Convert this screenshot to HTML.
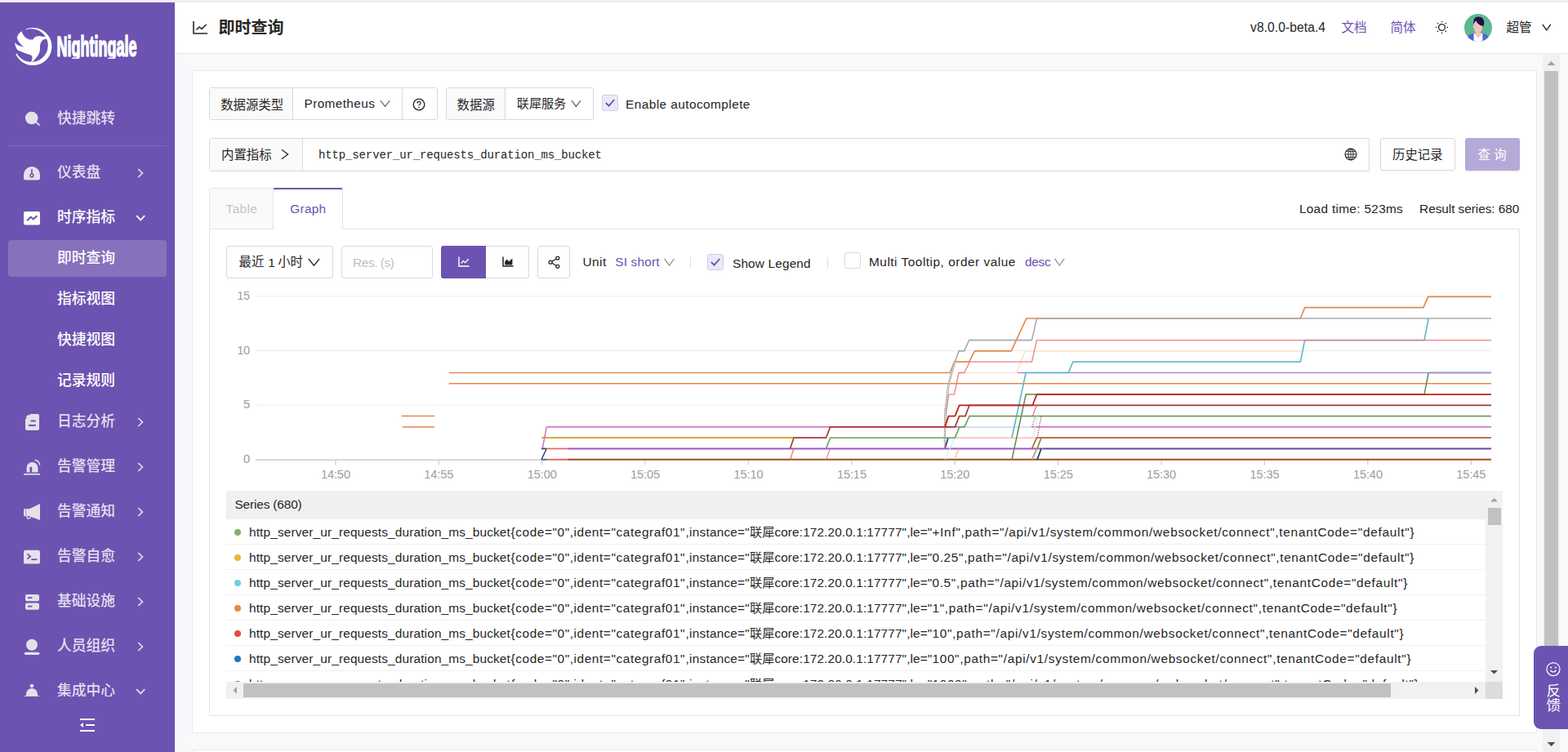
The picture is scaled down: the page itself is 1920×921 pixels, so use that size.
<!DOCTYPE html>
<html lang="zh-CN">
<head>
<meta charset="utf-8">
<title>Nightingale</title>
<style>
*{box-sizing:border-box;margin:0;padding:0}
html,body{width:1920px;height:921px;overflow:hidden;background:#f8f9fb;font-family:"Liberation Sans",sans-serif;font-size:15.4px;color:#262626}
.abs{position:absolute}
.cjt{display:inline-block;line-height:1;white-space:nowrap;font-family:"Liberation Sans","Noto Sans CJK SC",sans-serif;vertical-align:baseline}
#topband{position:absolute;left:0;top:0;width:1920px;height:3px;background:#e9ebf0}
#topband:before{content:"";position:absolute;left:0;top:0;width:100%;height:1px;background:#f4f5f7}
/* sidebar */
#side{position:absolute;left:0;top:3px;width:214px;height:918px;background:#6c53b1;overflow:hidden}
#menu{position:absolute;left:0;top:0;width:214px;height:850px;overflow:hidden}
.mi{position:absolute;left:10px;width:194px;height:45px;border-radius:4px}
.mi.act{background:#8771bd}
.mi .ic{position:absolute;left:19px;top:12px;width:21px;height:21px}
.mi .tx{position:absolute;left:60px;top:13.6px;height:18px;line-height:0}
.mi .tx .cjt{font-size:17.8px;font-weight:500}
.mi .ar{position:absolute;left:155px;top:15px;width:14px;height:14px}
#sdiv{position:absolute;left:10px;top:175px;width:194px;height:1px;background:#7f69bc}
/* header */
#hdr{position:absolute;left:214px;top:3px;width:1706px;height:63px;background:#fff;border-bottom:1px solid #e6e8ed}
.lk{color:#6c53b1}
/* card */
#card{position:absolute;left:235px;top:86px;width:1647px;height:812px;background:#fff;border:1px solid #e7e9ed}
#card2{position:absolute;left:235px;top:918px;width:1647px;height:3px;background:#fff;border:1px solid #e7e9ed;border-bottom:none}
.grp{position:absolute;height:40px;border:1px solid #d9d9d9;border-radius:3px;background:#fff}
.addon{position:absolute;top:0;height:38px;background:#fafafa;border-right:1px solid #d9d9d9}
.t{position:absolute;white-space:nowrap;line-height:1}
</style>
</head>
<body>
<div id="topband"></div>

<!-- ================= SIDEBAR ================= -->
<div id="side">
  <div id="logo" class="abs" style="left:0;top:0;width:214px;height:110px">
    <svg class="abs" style="left:-0.5px;top:17px;overflow:visible" width="214" height="80" viewBox="0 0 2054.4 768"><defs><clipPath id="rc"><path d="M300 60 L700 60 L700 700 L150 700 L150 440 L388 440 L388 300 L300 200 Z"/></clipPath></defs><path d="M388 134 A221 221 0 1 1 387.9 134 Z M368 146 A196 196 0 1 0 368.1 146 Z" fill="#fff" fill-rule="evenodd" clip-path="url(#rc)"/><path d="M205 455 C240 505 290 535 345 545 L335 560 C280 550 230 515 205 455 Z" fill="#fff"/><path d="M255 175 C268 228 318 282 386 274 C402 238 442 224 482 236 L592 250 L504 276 C478 300 466 340 470 382 C470 442 430 502 322 584 L372 522 C386 492 382 470 364 456 C318 442 250 420 206 396 C190 376 180 350 172 308 C200 340 240 356 282 360 C240 330 206 290 200 250 C206 220 230 190 255 175 Z" fill="#fff"/></svg><svg class="abs" style="left:66px;top:30px;overflow:visible" width="110" height="50"><defs><clipPath id="lt"><rect x="0" y="0" width="110" height="36.7"/></clipPath></defs><g clip-path="url(#lt)"><text x="0" y="0" transform="translate(3.5,35.5) scale(0.515,1)" font-family="Liberation Sans, sans-serif" font-weight="bold" font-size="35" fill="#fff" stroke="#fff" stroke-width="1.6" stroke-linejoin="round">Nightingale</text></g><path d="M28.1,35 L31.5,35 L31.5,37.5 Q31.5,39.1 29.7,39.1 L23.0,39.1 Q22.1,39.1 22.1,38.3 L22.1,37.5 L27.2,37.5 Q28.1,37.5 28.1,36.7 Z" fill="#fff"/><path d="M72.1,35 L75.5,35 L75.5,37.5 Q75.5,39.1 73.7,39.1 L67.0,39.1 Q66.1,39.1 66.1,38.3 L66.1,37.5 L71.2,37.5 Q72.1,37.5 72.1,36.7 Z" fill="#fff"/></svg>
  </div>
  <div id="menu">
    <div class="mi" style="top:120px"><span class="ic"><svg width="21" height="21" viewBox="0 0 21 21" style="display:block;overflow:visible" ><circle cx="9.7" cy="9.5" r="7.8" fill="#e3e1ea"/><path d="M14.5 14 L19 18.2" stroke="#e3e1ea" stroke-width="1.8" stroke-linecap="round"/></svg></span><span class="tx"><span class="cjt" style="width:71.2px;color:#e3deef">快捷跳转</span></span></div>
    <div id="sdiv"></div>
    <div class="mi" style="top:186px"><span class="ic"><svg width="21" height="21" viewBox="0 0 21 21" style="display:block;overflow:visible" ><path d="M0 13 A10 10 0 0 1 20 13 L20 17.2 Q20 19.6 17.6 19.6 L2.4 19.6 Q0 19.6 0 17.2 Z" fill="#e3e1ea"/><path d="M10 6.2 L10 12" stroke="#6c53b1" stroke-width="1.7"/><circle cx="10" cy="14" r="1.9" fill="none" stroke="#6c53b1" stroke-width="1.5"/></svg></span><span class="tx"><span class="cjt" style="width:53.4px;color:#e3deef">仪表盘</span></span><span class="ar"><svg width="14" height="14" viewBox="0 0 14 14" style="display:block;overflow:visible" ><path d="M4.2 3 L9.4 8 L4.2 13" fill="none" stroke="#e3deef" stroke-width="1.7"/></svg></span></div>
    <div class="mi" style="top:241px"><span class="ic"><svg width="21" height="21" viewBox="0 0 21 21" style="display:block;overflow:visible" ><rect x="0" y="3" width="20" height="16.6" rx="2" fill="#fff"/><path d="M4.2 14.2 L8.6 9.8 L11.8 12.4 L16.4 8.2" fill="none" stroke="#6c53b1" stroke-width="2" stroke-linejoin="miter"/></svg></span><span class="tx"><span class="cjt" style="width:71.2px;color:#ffffff">时序指标</span></span><span class="ar"><svg width="14" height="14" viewBox="0 0 14 14" style="display:block;overflow:visible" ><path d="M2.2 5.2 L7.2 10.4 L12.2 5.2" fill="none" stroke="#fff" stroke-width="1.7"/></svg></span></div>
    <div class="mi act" style="top:291px"><span class="tx"><span class="cjt" style="width:71.2px;color:#ffffff">即时查询</span></span></div>
    <div class="mi" style="top:341px"><span class="tx"><span class="cjt" style="width:71.2px;color:#ffffff">指标视图</span></span></div>
    <div class="mi" style="top:391px"><span class="tx"><span class="cjt" style="width:71.2px;color:#ffffff">快捷视图</span></span></div>
    <div class="mi" style="top:441px"><span class="tx"><span class="cjt" style="width:71.2px;color:#ffffff">记录规则</span></span></div>
    <div class="mi" style="top:491px"><span class="ic"><svg width="21" height="21" viewBox="0 0 21 21" style="display:block;overflow:visible" ><path d="M8.4 1 L17 1 Q19 1 19 3 L19 19 Q19 21 17 21 L4 21 Q2 21 2 19 L2 7.4 Z" fill="#e3e1ea"/><path d="M2.2 5.3 L6.3 1.2 L6.3 5.3 Z" fill="#e3e1ea"/><path d="M8.6 9.5 L14.8 9.5 M6 15 L14.8 15" stroke="#6c53b1" stroke-width="2"/></svg></span><span class="tx"><span class="cjt" style="width:71.2px;color:#e3deef">日志分析</span></span><span class="ar"><svg width="14" height="14" viewBox="0 0 14 14" style="display:block;overflow:visible" ><path d="M4.2 3 L9.4 8 L4.2 13" fill="none" stroke="#e3deef" stroke-width="1.7"/></svg></span></div>
    <div class="mi" style="top:546px"><span class="ic"><svg width="21" height="21" viewBox="0 0 21 21" style="display:block;overflow:visible" ><path d="M3.6 17.6 L3.6 12 A6.95 6.95 0 0 1 17.5 12 L17.5 17.6 Z" fill="#e3e1ea"/><path d="M7.4 17.7 L7.4 12.2 Q7.4 10.6 8.8 10.6 Q10.2 10.6 10.2 12.2 L10.2 17.7 Z" fill="#6c53b1"/><path d="M0 19.8 L20 19.8" stroke="#e3e1ea" stroke-width="1.7"/><path d="M14.2 2.6 Q18.6 3.6 19.6 8" fill="none" stroke="#e3e1ea" stroke-width="1.5" stroke-linecap="round"/></svg></span><span class="tx"><span class="cjt" style="width:71.2px;color:#e3deef">告警管理</span></span><span class="ar"><svg width="14" height="14" viewBox="0 0 14 14" style="display:block;overflow:visible" ><path d="M4.2 3 L9.4 8 L4.2 13" fill="none" stroke="#e3deef" stroke-width="1.7"/></svg></span></div>
    <div class="mi" style="top:601px"><span class="ic"><svg width="21" height="21" viewBox="0 0 21 21" style="display:block;overflow:visible" ><path d="M20 1 L20 21 L7 16.2 L1.2 16.2 Q0 16.2 0 15 L0 8.4 Q0 7.2 1.2 7.2 L7 7.2 Z" fill="#e3e1ea"/><path d="M4 16.5 Q4 19.2 6.2 19.2 Q8 19.2 8.2 17" fill="none" stroke="#e3e1ea" stroke-width="1.3"/><path d="M2.6 8 L2.6 15.4" stroke="#6c53b1" stroke-width="1" opacity=".55"/></svg></span><span class="tx"><span class="cjt" style="width:71.2px;color:#e3deef">告警通知</span></span><span class="ar"><svg width="14" height="14" viewBox="0 0 14 14" style="display:block;overflow:visible" ><path d="M4.2 3 L9.4 8 L4.2 13" fill="none" stroke="#e3deef" stroke-width="1.7"/></svg></span></div>
    <div class="mi" style="top:656px"><span class="ic"><svg width="21" height="21" viewBox="0 0 21 21" style="display:block;overflow:visible" ><rect x="0" y="2.8" width="20" height="16.8" rx="2.2" fill="#e3e1ea"/><path d="M4.4 7.4 L8.2 10.5 L4.4 13.6" fill="none" stroke="#6c53b1" stroke-width="1.8"/><path d="M9.4 14.2 L16.4 14.2" stroke="#6c53b1" stroke-width="1.8"/></svg></span><span class="tx"><span class="cjt" style="width:71.2px;color:#e3deef">告警自愈</span></span><span class="ar"><svg width="14" height="14" viewBox="0 0 14 14" style="display:block;overflow:visible" ><path d="M4.2 3 L9.4 8 L4.2 13" fill="none" stroke="#e3deef" stroke-width="1.7"/></svg></span></div>
    <div class="mi" style="top:711px"><span class="ic"><svg width="21" height="21" viewBox="0 0 21 21" style="display:block;overflow:visible" ><rect x="2" y="2" width="17" height="8.2" rx="2" fill="#e3e1ea"/><rect x="2" y="12.4" width="17" height="8.4" rx="2" fill="#e3e1ea"/><path d="M5 6.1 L10.4 6.1 M5 16.6 L10.4 16.6" stroke="#6c53b1" stroke-width="1.6"/></svg></span><span class="tx"><span class="cjt" style="width:71.2px;color:#e3deef">基础设施</span></span><span class="ar"><svg width="14" height="14" viewBox="0 0 14 14" style="display:block;overflow:visible" ><path d="M4.2 3 L9.4 8 L4.2 13" fill="none" stroke="#e3deef" stroke-width="1.7"/></svg></span></div>
    <div class="mi" style="top:766px"><span class="ic"><svg width="21" height="21" viewBox="0 0 21 21" style="display:block;overflow:visible" ><circle cx="10" cy="8.8" r="7" fill="#e3e1ea"/><path d="M2.4 19.3 L17.8 19.3" stroke="#e3e1ea" stroke-width="3.2" stroke-linecap="round"/></svg></span><span class="tx"><span class="cjt" style="width:71.2px;color:#e3deef">人员组织</span></span><span class="ar"><svg width="14" height="14" viewBox="0 0 14 14" style="display:block;overflow:visible" ><path d="M4.2 3 L9.4 8 L4.2 13" fill="none" stroke="#e3deef" stroke-width="1.7"/></svg></span></div>
    <div class="mi" style="top:821px"><span class="ic"><svg width="21" height="21" viewBox="0 0 21 21" style="display:block;overflow:visible" ><circle cx="10" cy="4" r="2.3" fill="#e3e1ea"/><path d="M3 16.4 L3 14 A7 7 0 0 1 17 14 L17 16.4 Z" fill="#e3e1ea"/><path d="M1 16.8 L19 16.8" stroke="#e3e1ea" stroke-width="1.4"/></svg></span><span class="tx"><span class="cjt" style="width:71.2px;color:#e3deef">集成中心</span></span><span class="ar"><svg width="14" height="14" viewBox="0 0 14 14" style="display:block;overflow:visible" ><path d="M2.2 5.2 L7.2 10.4 L12.2 5.2" fill="none" stroke="#e3deef" stroke-width="1.7"/></svg></span></div>
  </div>
  <div id="collapse" class="abs" style="left:97px;top:876px;width:20px;height:18px"><svg width="20" height="18" viewBox="0 0 20 18" style="display:block;overflow:visible" ><path d="M1 2 L19 2 M8 9 L19 9 M1 16 L19 16" stroke="#fff" stroke-width="1.8"/><path d="M1 9 L5 6 L5 12 Z" fill="#fff"/></svg></div>
</div>

<!-- ================= HEADER ================= -->
<div id="hdr">
  <span class="abs" style="left:22px;top:23px;width:18px;height:16px"><svg width="18" height="16" viewBox="0 0 18 16" style="display:block;overflow:visible" ><path d="M1 0 L1 15 L18 15" fill="none" stroke="#262626" stroke-width="1.6"/><path d="M4.5 10.6 L8 7 L11 9.4 L16.6 4" fill="none" stroke="#262626" stroke-width="1.5"/></svg></span>
  <span class="t" style="left:53.5px;top:21px"><span class="cjt" style="font-size:20px;font-weight:bold;width:80px;color:#262626">即时查询</span></span>
  <span class="t" id="ver" style="left:1317.0px;top:23px;font-size:15.6px;color:#262626;letter-spacing:0.083px">v8.0.0-beta.4</span>
  <span class="t" style="left:1428.5px;top:22.5px"><span class="cjt" style="font-size:15.6px;width:31.2px;color:#6c53b1">文档</span></span>
  <span class="t" style="left:1488.5px;top:22.5px"><span class="cjt" style="font-size:15.6px;width:31.2px;color:#6c53b1">简体</span></span>
  <span class="abs" style="left:1543px;top:22px;width:17px;height:17px"><svg width="17" height="17" viewBox="0 0 17 17" style="display:block;overflow:visible" ><circle cx="8.5" cy="8.5" r="3.9" fill="none" stroke="#262626" stroke-width="1.3"/><circle cx="15.40" cy="8.50" r="0.8" fill="#262626"/><circle cx="13.38" cy="13.38" r="0.8" fill="#262626"/><circle cx="8.50" cy="15.40" r="0.8" fill="#262626"/><circle cx="3.62" cy="13.38" r="0.8" fill="#262626"/><circle cx="1.60" cy="8.50" r="0.8" fill="#262626"/><circle cx="3.62" cy="3.62" r="0.8" fill="#262626"/><circle cx="8.50" cy="1.60" r="0.8" fill="#262626"/><circle cx="13.38" cy="3.62" r="0.8" fill="#262626"/></svg></span>
  <span class="abs" style="left:1579px;top:13.5px;width:34px;height:34px"><svg width="34" height="34" viewBox="0 0 34 34" style="display:block;overflow:visible" ><defs><clipPath id="av"><circle cx="17" cy="17" r="17"/></clipPath></defs><g clip-path="url(#av)"><rect width="34" height="34" fill="#5cb892"/><path d="M3 34 L5 27 Q6 25 9 24.4 L14.6 23 L19.4 23 L25 24.4 Q28 25 29 27 L31 34 Z" fill="#5562d2"/><path d="M11.6 24 L22.4 24 L22.4 34 L11.6 34 Z" fill="#fff"/><path d="M13.4 22.6 L20.6 22.6 L20.2 26.2 L17 29.4 L13.8 26.2 Z" fill="#f7c0c0"/><path d="M11.6 9.6 Q11.6 5 17 5 Q22.2 5 22.2 10 L22 17.6 Q21.6 22.4 17.4 22.8 L14 22.8 Q12.2 21 12 17.4 Q10.2 17 10.6 15 Q10.8 13.6 11.8 13.8 Z" fill="#f7c0c0"/><path d="M11.4 12.8 Q10.4 3.4 17.4 3.6 Q24.4 3.8 24.2 11 Q24.2 14.4 23.4 15 Q20 14.6 17.4 12.4 Q15.2 10.6 14.4 8.4 Q13.4 8.6 12.8 10.2 Z" fill="#1f1040"/></g></svg></span>
  <span class="t" style="left:1630.5px;top:23.3px"><span class="cjt" style="font-size:15.6px;width:31.2px;color:#262626">超管</span></span>
  <span class="abs" style="left:1674px;top:26px;width:12px;height:9px"><svg width="12" height="9" viewBox="0 0 12 9" style="display:block;overflow:visible" ><path d="M0.8 1 L5.8 8 L10.8 1" fill="none" stroke="#262626" stroke-width="1.3"/></svg></span>
</div>

<!-- ================= CONTENT ================= -->
<div id="card">
<div id="pg" style="position:absolute;left:-236px;top:-87px;width:1920px;height:921px">
<style>
#pg .vd{position:absolute;width:1px;background:#d9d9d9}
#pg .box{position:absolute;border:1px solid #d9d9d9;border-radius:3px;background:#fff;height:40px}
#pg .cb{position:absolute;width:20px;height:20px;border-radius:3px}
#pg .cb.on{background:#ece9f6;border:1px solid #d3cceb}
#pg .cb.off{background:#fff;border:1px solid #d9d9d9}
#pg .row{position:absolute;left:277px;width:1542px;height:31px;border-bottom:1px solid #f0f0f0}
#pg .row i{position:absolute;left:10.2px;top:11.6px;width:8px;height:8px;border-radius:50%}
#pg .row>span{position:absolute;left:28px;top:7.6px;white-space:nowrap;line-height:1;font-size:15.4px;color:#262626}
</style>

<!-- ===== row 1 : datasource ===== -->
<div class="grp" style="left:256px;top:107px;width:280px"></div>
<div class="addon" style="left:257px;top:108px;width:102px"></div>
<div class="vd" style="left:492px;top:108px;height:38px"></div>
<span class="t" style="left:270.2px;top:120.7px"><span class="cjt" style="font-size:15.4px;width:77px;color:#262626">数据源类型</span></span>
<span class="t" id="prom" style="left:372.5px;top:118.9px;letter-spacing:0.378px">Prometheus</span>
<svg class="abs" style="left:465px;top:122px" width="14" height="10"><path d="M0.8 1 L6.6 8.4 L12.4 1" fill="none" stroke="#595959" stroke-width="1.2"/></svg>
<svg class="abs" style="left:505px;top:119.6px" width="16" height="16"><circle cx="8" cy="8" r="6.8" fill="none" stroke="#262626" stroke-width="1.3"/><path d="M5.9 6.6 Q5.9 4.4 8 4.4 Q10.1 4.4 10.1 6.3 Q10.1 7.4 8.9 8 Q8 8.5 8 9.6" fill="none" stroke="#262626" stroke-width="1.2"/><circle cx="8" cy="11.5" r=".85" fill="#262626"/></svg>

<div class="grp" style="left:546px;top:107px;width:181px"></div>
<div class="addon" style="left:547px;top:108px;width:72px"></div>
<span class="t" style="left:559.6px;top:120.7px"><span class="cjt" style="font-size:15.4px;width:46.2px;color:#262626">数据源</span></span>
<span class="t" style="left:632.8px;top:119.3px"><span class="cjt" style="font-size:15.1px;width:60.4px;color:#262626">联犀服务</span></span>
<svg class="abs" style="left:699px;top:122px" width="14" height="10"><path d="M0.8 1 L6.4 8.4 L12 1" fill="none" stroke="#595959" stroke-width="1.2"/></svg>
<div class="cb on" style="left:737px;top:115.8px"></div>
<svg class="abs" style="left:737px;top:115.8px" width="20" height="20"><path d="M4.8 10 L8.6 13.6 L15.2 6" fill="none" stroke="#6c53b1" stroke-width="1.9"/></svg>
<span class="t" id="eac" style="left:766.0px;top:119.5px;letter-spacing:0.433px">Enable autocomplete</span>

<!-- ===== row 2 : query ===== -->
<div class="grp" style="left:256px;top:169px;width:1421px;height:41px;border-radius:3px 0 0 3px"></div>
<div class="addon" style="left:257px;top:170px;width:114px;height:39px"></div>
<span class="t" style="left:271px;top:182.4px"><span class="cjt" style="font-size:15.4px;width:61.6px;color:#262626">内置指标</span></span>
<svg class="abs" style="left:343px;top:181.6px" width="12" height="14"><path d="M2 1.2 L9.6 7 L2 12.8" fill="none" stroke="#262626" stroke-width="1.3"/></svg>
<span class="t" id="mono" style="left:390.1px;top:182.6px;font-family:'Liberation Mono',monospace;font-size:14px;letter-spacing:-0.147px;color:#262626">http_server_ur_requests_duration_ms_bucket</span>
<svg class="abs" style="left:1646.4px;top:181.4px" width="16" height="16"><circle cx="8" cy="8" r="6.9" fill="none" stroke="#262626" stroke-width="1.2"/><ellipse cx="8" cy="8" rx="3.1" ry="6.9" fill="none" stroke="#262626" stroke-width="1"/><path d="M8 1 L8 15 M1.2 8 L14.8 8 M2.4 4.4 L13.6 4.4 M2.4 11.6 L13.6 11.6" stroke="#262626" stroke-width="1" opacity=".9"/></svg>
<div class="box" style="left:1690px;top:169px;width:92px;box-shadow:0 2px 0 rgba(0,0,0,.016)"></div>
<span class="t" style="left:1705px;top:182px"><span class="cjt" style="font-size:15.4px;width:61.6px;color:#262626">历史记录</span></span>
<div class="abs" style="left:1794px;top:169px;width:67px;height:40px;background:#b5a9d8;border-radius:3px;box-shadow:0 2px 0 rgba(0,0,0,.045)"></div>
<span class="t" style="left:1809.6px;top:182px"><span class="cjt" style="font-size:15.4px;width:15.4px;color:#fff">查</span></span><span class="t" style="left:1829.2px;top:182px"><span class="cjt" style="font-size:15.4px;width:15.4px;color:#fff">询</span></span>

<!-- ===== tabs ===== -->
<div class="abs" style="left:256px;top:280px;width:1605px;height:597px;border:1px solid #e3e5ec;background:#fff"></div>
<div class="abs" style="left:256px;top:230px;width:79px;height:51px;background:#fafafa;border:1px solid #e3e5ec;border-radius:3px 0 0 0"></div>
<div class="abs" style="left:334px;top:230px;width:86px;height:51px;background:#fff;border:1px solid #e3e5ec;border-top:2px solid #6c53b1;border-bottom:none;border-radius:3px 3px 0 0"></div>
<span class="t" id="ttab" style="left:276.6px;top:247.8px;color:#c4c4c4;letter-spacing:0.350px">Table</span>
<span class="t" id="gtab" style="left:355.3px;top:247.8px;color:#6c53b1;letter-spacing:0.275px">Graph</span>
<span class="t" id="load" style="left:1590.9px;top:247.8px;letter-spacing:0.306px">Load time: 523ms</span>
<span class="t" id="rser" style="left:1738.1px;top:247.8px;letter-spacing:-0.059px">Result series: 680</span>

<!-- ===== toolbar ===== -->
<div class="box" style="left:277px;top:301px;width:131px;box-shadow:0 2px 0 rgba(0,0,0,.016)"></div>
<span class="t" style="left:292.6px;top:313.2px"><span class="cjt" style="font-size:15.4px;width:30.8px;color:#262626">最近</span></span>
<span class="t" style="left:328.2px;top:313.6px">1</span>
<span class="t" style="left:340.2px;top:313.2px"><span class="cjt" style="font-size:15.4px;width:30.8px;color:#262626">小时</span></span>
<svg class="abs" style="left:377px;top:315.6px" width="16" height="11"><path d="M0.8 1 L7.4 9.2 L14 1" fill="none" stroke="#262626" stroke-width="1.3"/></svg>
<div class="box" style="left:418px;top:301px;width:112px"></div>
<span class="t" id="res" style="left:432.1px;top:313.7px;color:#bfbfbf;letter-spacing:-0.444px">Res. (s)</span>
<div class="abs" style="left:540px;top:301px;width:55px;height:40px;background:#6c53b1;border-radius:3px 0 0 3px"></div>
<svg class="abs" style="left:560.5px;top:313.6px" width="14" height="13"><path d="M1 0.4 L1 12 L13.6 12" fill="none" stroke="#fff" stroke-width="1.4"/><path d="M3.6 8.6 L6.2 5.6 L8.6 7.6 L12.6 3.2" fill="none" stroke="#fff" stroke-width="1.3"/></svg>
<div class="abs" style="left:595px;top:301px;width:53px;height:40px;background:#fff;border:1px solid #d9d9d9;border-left:none;border-radius:0 3px 3px 0"></div>
<svg class="abs" style="left:614.6px;top:313.6px" width="14" height="13"><path d="M1 0.4 L1 12 L13.6 12" fill="none" stroke="#262626" stroke-width="1.5"/><path d="M3.2 10.4 L3.2 6.4 L5.8 3.6 L8.2 6.2 L12.4 2.4 L12.4 10.4 Z" fill="#262626"/></svg>
<div class="box" style="left:658px;top:301px;width:40px;box-shadow:0 2px 0 rgba(0,0,0,.016)"></div>
<svg class="abs" style="left:671.4px;top:312.8px" width="16" height="17"><circle cx="3.1" cy="8.2" r="2" fill="none" stroke="#262626" stroke-width="1.3"/><circle cx="11.8" cy="3.1" r="2" fill="none" stroke="#262626" stroke-width="1.3"/><circle cx="11.8" cy="13.3" r="2" fill="none" stroke="#262626" stroke-width="1.3"/><path d="M4.9 7.1 L10 4.2 M4.9 9.3 L10 12.2" stroke="#262626" stroke-width="1.3"/></svg>
<span class="t" id="unit" style="left:713.4px;top:312.5px;letter-spacing:0.530px">Unit</span>
<span class="t" id="sish" style="left:753.3px;top:312.5px;color:#6c53b1;letter-spacing:0.159px">SI short</span>
<svg class="abs" style="left:813px;top:316px" width="14" height="11"><path d="M0.6 0.8 L6.6 9 L12.6 0.8" fill="none" stroke="#8c8c8c" stroke-width="1.2"/></svg>
<div class="abs" style="left:845px;top:315px;width:1px;height:13px;background:#dcdcdc"></div>
<div class="cb on" style="left:866px;top:311px"></div>
<svg class="abs" style="left:866px;top:311px" width="20" height="20"><path d="M4.8 10 L8.6 13.6 L15.2 6" fill="none" stroke="#6c53b1" stroke-width="1.9"/></svg>
<span class="t" id="shl" style="left:897.0px;top:315px;letter-spacing:0.150px">Show Legend</span>
<div class="abs" style="left:1013px;top:315px;width:1px;height:13px;background:#dcdcdc"></div>
<div class="cb off" style="left:1034px;top:309px"></div>
<span class="t" id="mtt" style="left:1064.0px;top:313.2px;letter-spacing:0.510px">Multi Tooltip, order value</span>
<span class="t" id="desc" style="left:1255.0px;top:313.2px;color:#6c53b1;letter-spacing:-0.254px">desc</span>
<svg class="abs" style="left:1291px;top:316.4px" width="14" height="11"><path d="M0.6 0.8 L6.4 9 L12.2 0.8" fill="none" stroke="#8c8c8c" stroke-width="1.2"/></svg>

<!-- ===== chart ===== -->
<svg class="abs" style="left:277px;top:350px" width="1563" height="246" viewBox="277 350 1563 246">
<path d="M313 496.1 H1826" stroke="#f0f0f0" stroke-width="1.3"/>
<path d="M313 429.5 H1826" stroke="#f0f0f0" stroke-width="1.3"/>
<path d="M313 362.8 H1826" stroke="#f0f0f0" stroke-width="1.3"/>
<path d="M313 563.2 H1826" stroke="#cfcfcf" stroke-width="1.4"/>
<g font-family="Liberation Sans, sans-serif" font-size="14.6px" fill="#9c9c9c">
<path d="M410.9 563.5 V569.5" stroke="#cfcfcf" stroke-width="1.3"/>
<text x="410.9" y="586" text-anchor="middle" letter-spacing="-0.1">14:50</text>
<path d="M537.3 563.5 V569.5" stroke="#cfcfcf" stroke-width="1.3"/>
<text x="537.3" y="586" text-anchor="middle" letter-spacing="-0.1">14:55</text>
<path d="M663.7 563.5 V569.5" stroke="#cfcfcf" stroke-width="1.3"/>
<text x="663.7" y="586" text-anchor="middle" letter-spacing="-0.1">15:00</text>
<path d="M790.1 563.5 V569.5" stroke="#cfcfcf" stroke-width="1.3"/>
<text x="790.1" y="586" text-anchor="middle" letter-spacing="-0.1">15:05</text>
<path d="M916.5 563.5 V569.5" stroke="#cfcfcf" stroke-width="1.3"/>
<text x="916.5" y="586" text-anchor="middle" letter-spacing="-0.1">15:10</text>
<path d="M1042.9 563.5 V569.5" stroke="#cfcfcf" stroke-width="1.3"/>
<text x="1042.9" y="586" text-anchor="middle" letter-spacing="-0.1">15:15</text>
<path d="M1169.3 563.5 V569.5" stroke="#cfcfcf" stroke-width="1.3"/>
<text x="1169.3" y="586" text-anchor="middle" letter-spacing="-0.1">15:20</text>
<path d="M1295.7 563.5 V569.5" stroke="#cfcfcf" stroke-width="1.3"/>
<text x="1295.7" y="586" text-anchor="middle" letter-spacing="-0.1">15:25</text>
<path d="M1422.1 563.5 V569.5" stroke="#cfcfcf" stroke-width="1.3"/>
<text x="1422.1" y="586" text-anchor="middle" letter-spacing="-0.1">15:30</text>
<path d="M1548.5 563.5 V569.5" stroke="#cfcfcf" stroke-width="1.3"/>
<text x="1548.5" y="586" text-anchor="middle" letter-spacing="-0.1">15:35</text>
<path d="M1674.9 563.5 V569.5" stroke="#cfcfcf" stroke-width="1.3"/>
<text x="1674.9" y="586" text-anchor="middle" letter-spacing="-0.1">15:40</text>
<path d="M1801.3 563.5 V569.5" stroke="#cfcfcf" stroke-width="1.3"/>
<text x="1801.3" y="586" text-anchor="middle" letter-spacing="-0.1">15:45</text>
<text x="306" y="567.1" text-anchor="end" letter-spacing="-0.2">0</text>
<text x="306" y="500.4" text-anchor="end" letter-spacing="-0.2">5</text>
<text x="306" y="433.8" text-anchor="end" letter-spacing="-0.2">10</text>
<text x="306" y="367.1" text-anchor="end" letter-spacing="-0.2">15</text>
</g>
<polyline points="669.3,522.9 1826.0,522.9" fill="none" stroke="#d676cd" stroke-width="1.6" stroke-linejoin="round"/>
<polyline points="663.0,549.5 664.2,549.5 669.3,522.9" fill="none" stroke="#d676cd" stroke-width="1.6" stroke-linejoin="round"/>
<polyline points="1174.0,522.9 1263.0,522.9" fill="none" stroke="#d9ecef" stroke-width="1.8" stroke-linejoin="round"/>
<polyline points="549.7,469.8 1826.0,469.8" fill="none" stroke="#e58947" stroke-width="1.6" stroke-linejoin="round"/>
<polyline points="492.0,509.6 532.0,509.6" fill="none" stroke="#e58947" stroke-width="1.5" stroke-linejoin="round"/>
<polyline points="492.7,522.9 532.0,522.9" fill="none" stroke="#e58947" stroke-width="1.5" stroke-linejoin="round"/>
<polyline points="663.0,536.2 972.0,536.2" fill="none" stroke="#c9a21a" stroke-width="1.7" stroke-linejoin="round"/>
<polyline points="1170.0,536.2 1269.0,536.2" fill="none" stroke="#f6bcbc" stroke-width="1.6" stroke-linejoin="round"/>
<polyline points="1263.5,549.5 1269.5,536.2 1826.0,536.2" fill="none" stroke="#b65f38" stroke-width="1.7" stroke-linejoin="round"/>
<polyline points="663.0,562.8 669.3,549.5" fill="none" stroke="#3f2b5b" stroke-width="1.4" stroke-linejoin="round"/>
<polyline points="663.0,549.5 669.0,549.5" fill="none" stroke="#2f575e" stroke-width="1.8" stroke-linejoin="round"/>
<polyline points="669.0,549.5 695.0,549.5" fill="none" stroke="#ea6460" stroke-width="1.7" stroke-linejoin="round"/>
<polyline points="695.0,549.5 1278.0,549.5" fill="none" stroke="#9d58bd" stroke-width="1.8" stroke-linejoin="round"/>
<polyline points="1278.0,549.5 1826.0,549.5" fill="none" stroke="#63489f" stroke-width="1.8" stroke-linejoin="round"/>
<polyline points="663.0,562.8 669.0,562.8" fill="none" stroke="#1f78c1" stroke-width="2" stroke-linejoin="round"/>
<polyline points="669.0,562.8 695.0,562.8" fill="none" stroke="#ea6460" stroke-width="1.8" stroke-linejoin="round"/>
<polyline points="695.0,562.8 1826.0,562.8" fill="none" stroke="#a9512e" stroke-width="1.9" stroke-linejoin="round"/>
<polyline points="967.5,562.8 972.0,549.5" fill="none" stroke="#ea6460" stroke-width="1.1" stroke-linejoin="round"/>
<polyline points="1011.5,562.8 1016.6,549.5" fill="none" stroke="#d676cd" stroke-width="1.1" stroke-linejoin="round"/>
<polyline points="1157.6,562.8 1174.7,522.9" fill="none" stroke="#c9f3fb" stroke-width="1.2" stroke-linejoin="round"/>
<polyline points="1169.0,562.8 1174.0,549.5" fill="none" stroke="#f9934e" stroke-width="1.3" stroke-dasharray="2 1.4" stroke-linejoin="round"/>
<polyline points="1157.0,549.5 1161.0,536.2" fill="none" stroke="#10467f" stroke-width="1.7" stroke-linejoin="round"/>
<polyline points="1174.0,456.5 1244.5,456.5 1255.4,429.9 1593.0,429.9" fill="none" stroke="#fbe3d0" stroke-width="1.6" stroke-linejoin="round"/>
<polyline points="1239.0,562.8 1256.2,483.1 1744.0,483.1 1749.2,456.5 1826.0,456.5" fill="none" stroke="#5c8a4a" stroke-width="1.5" stroke-linejoin="round"/>
<polyline points="1246.0,456.5 1826.0,456.5" fill="none" stroke="#9c8fdc" stroke-width="1.7" stroke-linejoin="round"/>
<polyline points="1239.0,536.2 1256.2,456.5 1308.3,456.5 1313.8,443.2 1592.4,443.2 1597.7,416.6 1744.0,416.6 1749.2,390.0" fill="none" stroke="#62bcc6" stroke-width="1.7" stroke-linejoin="round"/>
<polyline points="549.7,456.5 1163.4,456.5 1168.5,443.2 1186.7,443.2 1193.5,429.9 1238.3,429.9 1256.8,390.0 1592.4,390.0 1597.7,376.7 1743.0,376.7 1748.6,363.4 1826.0,363.4" fill="none" stroke="#e58947" stroke-width="1.7" stroke-linejoin="round"/>
<polyline points="1156.8,549.5 1158.0,509.6 1161.7,483.1 1168.5,483.1 1174.0,456.5 1180.7,456.5 1187.5,443.2 1263.5,443.2 1269.5,416.6 1826.0,416.6" fill="none" stroke="#f27c7c" stroke-width="1.3" stroke-linejoin="round"/>
<polyline points="1156.8,541.5 1157.6,501.7 1161.7,469.8 1165.4,456.5 1169.3,443.2 1174.0,429.9 1180.7,429.9 1186.7,416.6 1263.5,416.6 1269.5,390.0 1826.0,390.0" fill="none" stroke="#aaaaaa" stroke-width="1.6" stroke-linejoin="round"/>
<polyline points="1156.8,541.5 1157.6,501.7 1161.7,469.8 1165.4,456.5 1169.3,443.2" fill="none" stroke="#aaaaaa" stroke-width="2.3" stroke-linejoin="round"/>
<polyline points="1156.8,541.5 1157.6,501.7 1161.7,469.8 1165.4,456.5 1169.3,443.2" fill="none" stroke="#ffffff" stroke-width="1.1" stroke-dasharray="1.3 1.5" stroke-linejoin="round"/>
<polyline points="1011.5,549.5 1016.6,536.2 1169.4,536.2 1174.7,522.9 1181.0,522.9 1187.0,509.6 1826.0,509.6" fill="none" stroke="#6f9d5c" stroke-width="1.6" stroke-linejoin="round"/>
<polyline points="1157.0,522.9 1161.5,509.6 1169.4,509.6 1174.7,496.3 1264.4,496.3 1269.5,483.1 1826.0,483.1" fill="none" stroke="#be2314" stroke-width="1.8" stroke-linejoin="round"/>
<polyline points="967.5,549.5 972.0,536.2 1011.5,536.2 1016.6,522.9 1169.4,522.9 1174.7,509.6 1182.0,509.6 1187.0,496.3 1826.0,496.3" fill="none" stroke="#a53a3c" stroke-width="1.7" stroke-linejoin="round"/>
<polyline points="1264.4,509.6 1269.5,496.3" fill="none" stroke="#ea6460" stroke-width="1.1" stroke-linejoin="round"/>
<polyline points="1263.5,522.9 1268.0,509.6" fill="none" stroke="#9a9a9a" stroke-width="1.4" stroke-dasharray="1.4 1.2" stroke-linejoin="round"/>
<polyline points="1265.0,536.2 1270.0,509.6" fill="none" stroke="#cdeff7" stroke-width="1.4" stroke-linejoin="round"/>
<polyline points="1270.0,536.2 1275.0,509.6" fill="none" stroke="#c46a6a" stroke-width="1.4" stroke-dasharray="1.6 1.2" stroke-linejoin="round"/>
<polyline points="1270.0,549.5 1275.0,536.2" fill="none" stroke="#6d8c3a" stroke-width="1.6" stroke-linejoin="round"/>
<polyline points="1263.5,562.8 1269.0,549.5" fill="none" stroke="#82b5d8" stroke-width="1.2" stroke-linejoin="round"/>
<polyline points="1264.5,562.8 1270.0,549.5" fill="none" stroke="#f9934e" stroke-width="1.1" stroke-linejoin="round"/>
<polyline points="1270.0,562.8 1275.0,549.5" fill="none" stroke="#10467f" stroke-width="1.8" stroke-linejoin="round"/>
</svg>

<!-- ===== legend ===== -->
<div class="abs" style="left:277px;top:601px;width:1542px;height:35px;background:#f0f0f0"></div>
<span class="t" id="ser" style="left:287.5px;top:610px;letter-spacing:-0.149px">Series (680)</span>
<div class="abs" style="left:277px;top:636px;width:1542px;height:199px;overflow:hidden">
<div style="position:absolute;left:-277px;top:-636px">
<div class="row" style="top:636px"><i style="background:#7eb26d"></i><span id="r1"><span id="r1d" style="letter-spacing:0.143px">http_server_ur_requests_duration_ms_bucket</span><span id="r1e" style="letter-spacing:0.582px;margin-left:0.50px">{code="0",ident="categraf01"</span><span id="r1a" style="letter-spacing:0.213px;margin-left:0.50px">,instance="</span><span class="cjt" style="font-size:15.2px;width:30.4px;color:#262626">联犀</span><span id="r1b" style="letter-spacing:0.104px">core:172.20.0.1:17777",le="</span><span id="r1c" style="letter-spacing:0.719px">+Inf",path="/api/v1/system/common/websocket/connect",tenantCode="default"}</span></span></div>
<div class="row" style="top:667px"><i style="background:#eab839"></i><span id="r2"><span id="r2d" style="letter-spacing:0.143px">http_server_ur_requests_duration_ms_bucket</span><span id="r2e" style="letter-spacing:0.582px;margin-left:0.50px">{code="0",ident="categraf01"</span><span id="r2a" style="letter-spacing:0.213px;margin-left:0.50px">,instance="</span><span class="cjt" style="font-size:15.2px;width:30.4px;color:#262626">联犀</span><span id="r2b" style="letter-spacing:0.104px">core:172.20.0.1:17777",le="</span><span id="r2c" style="letter-spacing:0.663px">0.25",path="/api/v1/system/common/websocket/connect",tenantCode="default"}</span></span></div>
<div class="row" style="top:698px"><i style="background:#6ed0e0"></i><span id="r3"><span id="r3d" style="letter-spacing:0.143px">http_server_ur_requests_duration_ms_bucket</span><span id="r3e" style="letter-spacing:0.582px;margin-left:0.50px">{code="0",ident="categraf01"</span><span id="r3a" style="letter-spacing:0.213px;margin-left:0.50px">,instance="</span><span class="cjt" style="font-size:15.2px;width:30.4px;color:#262626">联犀</span><span id="r3b" style="letter-spacing:0.104px">core:172.20.0.1:17777",le="</span><span id="r3c" style="letter-spacing:0.680px">0.5",path="/api/v1/system/common/websocket/connect",tenantCode="default"}</span></span></div>
<div class="row" style="top:729px"><i style="background:#ef843c"></i><span id="r4"><span id="r4d" style="letter-spacing:0.143px">http_server_ur_requests_duration_ms_bucket</span><span id="r4e" style="letter-spacing:0.582px;margin-left:0.50px">{code="0",ident="categraf01"</span><span id="r4a" style="letter-spacing:0.213px;margin-left:0.50px">,instance="</span><span class="cjt" style="font-size:15.2px;width:30.4px;color:#262626">联犀</span><span id="r4b" style="letter-spacing:0.104px">core:172.20.0.1:17777",le="</span><span id="r4c" style="letter-spacing:0.700px">1",path="/api/v1/system/common/websocket/connect",tenantCode="default"}</span></span></div>
<div class="row" style="top:760px"><i style="background:#e24d42"></i><span id="r5"><span id="r5d" style="letter-spacing:0.143px">http_server_ur_requests_duration_ms_bucket</span><span id="r5e" style="letter-spacing:0.582px;margin-left:0.50px">{code="0",ident="categraf01"</span><span id="r5a" style="letter-spacing:0.213px;margin-left:0.50px">,instance="</span><span class="cjt" style="font-size:15.2px;width:30.4px;color:#262626">联犀</span><span id="r5b" style="letter-spacing:0.104px">core:172.20.0.1:17777",le="</span><span id="r5c" style="letter-spacing:0.684px">10",path="/api/v1/system/common/websocket/connect",tenantCode="default"}</span></span></div>
<div class="row" style="top:791px"><i style="background:#1f78c1"></i><span id="r6"><span id="r6d" style="letter-spacing:0.143px">http_server_ur_requests_duration_ms_bucket</span><span id="r6e" style="letter-spacing:0.582px;margin-left:0.50px">{code="0",ident="categraf01"</span><span id="r6a" style="letter-spacing:0.213px;margin-left:0.50px">,instance="</span><span class="cjt" style="font-size:15.2px;width:30.4px;color:#262626">联犀</span><span id="r6b" style="letter-spacing:0.104px">core:172.20.0.1:17777",le="</span><span id="r6c" style="letter-spacing:0.680px">100",path="/api/v1/system/common/websocket/connect",tenantCode="default"}</span></span></div>
<div class="row" style="top:822px"><i style="background:#ba43a9"></i><span id="r7"><span id="r7d" style="letter-spacing:0.143px">http_server_ur_requests_duration_ms_bucket</span><span id="r7e" style="letter-spacing:0.582px;margin-left:0.50px">{code="0",ident="categraf01"</span><span id="r7a" style="letter-spacing:0.213px;margin-left:0.50px">,instance="</span><span class="cjt" style="font-size:15.2px;width:30.4px;color:#262626">联犀</span><span id="r7b" style="letter-spacing:0.104px">core:172.20.0.1:17777",le="</span><span id="r7c" style="letter-spacing:0.680px">1000",path="/api/v1/system/common/websocket/connect",tenantCode="default"}</span></span></div>
</div></div>
<!-- legend v-scroll -->
<div class="abs" style="left:1819px;top:601px;width:21px;height:234px;background:#f1f1f1"></div>
<div class="abs" style="left:1822px;top:622px;width:16px;height:21px;background:#c1c1c1"></div>
<svg class="abs" style="left:1819px;top:601px" width="21" height="21"><path d="M6 13.5 L10.5 9 L15 13.5Z" fill="#a3a3a3"/></svg>
<svg class="abs" style="left:1819px;top:814px" width="21" height="21"><path d="M6 7 L15 7 L10.5 11.5Z" fill="#505050"/></svg>
<!-- legend h-scroll -->
<div class="abs" style="left:277px;top:835px;width:1542px;height:21px;background:#f1f1f1"></div>
<div class="abs" style="left:1819px;top:835px;width:21px;height:21px;background:#dcdcdc"></div>
<div class="abs" style="left:298px;top:837px;width:1405px;height:17px;background:#c1c1c1"></div>
<svg class="abs" style="left:277px;top:835px" width="21" height="21"><path d="M13 6 L13 15 L8.5 10.5Z" fill="#a3a3a3"/></svg>
<svg class="abs" style="left:1798px;top:835px" width="21" height="21"><path d="M8 6 L12.5 10.5 L8 15Z" fill="#505050"/></svg>
</div>

</div>
<div id="card2"></div>

<!-- main scrollbar -->
<div class="abs" style="left:1889px;top:66px;width:21px;height:855px;background:#f1f1f1"></div>
<div class="abs" style="left:1891px;top:87px;width:17px;height:760px;background:#c1c1c1"></div>
<svg class="abs" style="left:1889px;top:66px" width="21" height="21"><path d="M5.5 14 L10.5 9 L15.5 14Z" fill="#a3a3a3"/></svg>
<svg class="abs" style="left:1889px;top:900px" width="21" height="21"><path d="M5.5 9 L15.5 9 L10.5 14Z" fill="#505050"/></svg>

<!-- feedback -->
<div class="abs" style="left:1878px;top:791px;width:42px;height:102px;background:#6c53b1;border-radius:9px 0 0 9px;overflow:hidden">
<svg class="abs" style="left:14px;top:19px;overflow:visible" width="20" height="20"><circle cx="10" cy="9.6" r="8" fill="none" stroke="#fff" stroke-width="1.2"/><circle cx="7.2" cy="7.4" r="1" fill="#fff"/><circle cx="12.8" cy="7.4" r="1" fill="#fff"/><path d="M6.4 11 Q10 15 13.6 11" fill="none" stroke="#fff" stroke-width="1.2"/></svg><span class="t" style="left:15.5px;top:47px"><span class="cjt" style="font-size:17.6px;width:17.6px;color:#fff">反</span></span><span class="t" style="left:15.5px;top:64.5px"><span class="cjt" style="font-size:17.6px;width:17.6px;color:#fff">馈</span></span>
</div>
</body>
</html>
